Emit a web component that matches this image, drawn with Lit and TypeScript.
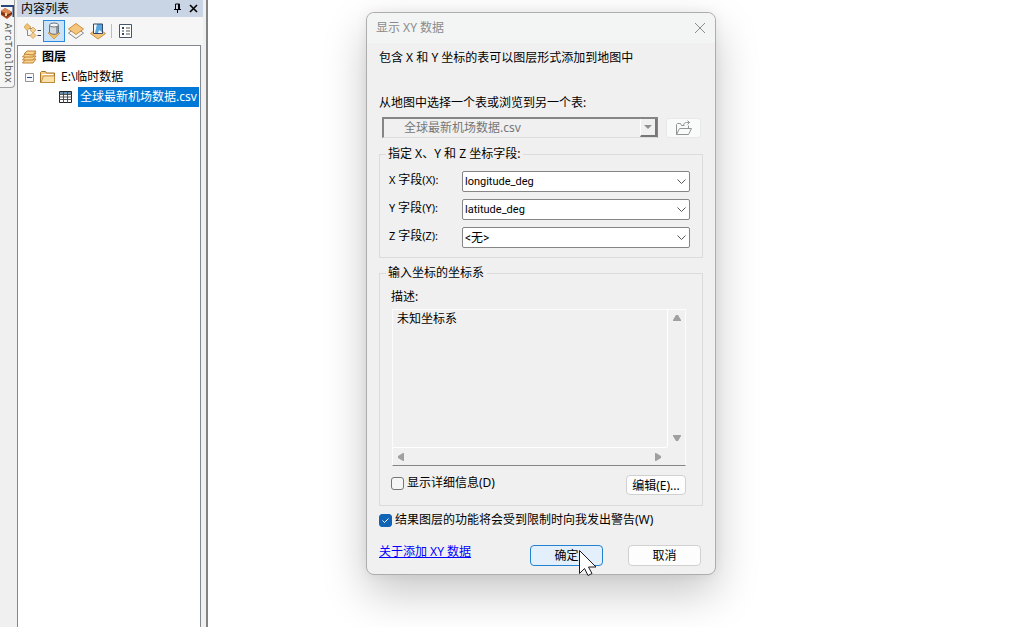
import { LitElement, html, css, svg } from "lit";
import { customElement, state } from "lit/decorators.js";

const sheet = (y: number, fill: string, stroke: string) =>
  svg`<path d="M.5 ${y}L8 ${y - 5.5}L15.500 ${y}L8 ${y + 5.5}Z" fill=${fill} stroke=${stroke}/>`;

const base = css`
  :host { box-sizing: border-box; font: 12px/16px "Noto Sans", "Noto Sans CJK SC", sans-serif; color: #000; }
  * { box-sizing: border-box; }
  svg { display: block; flex: none; }
  button, select, textarea, input { font: inherit; color: inherit; margin: 0; }
`;

@customElement("contents-panel")
class ContentsPanel extends LitElement {
  static styles = [base, css`
    :host { display: flex; width: 208px; flex: none; background: #f0f0f0; border-right: 2px solid #838383; }
    .dock { width: 17px; flex: none; }
    .tab {
      width: 15px; height: 88px; padding: 5px 0 0; display: flex; flex-direction: column; align-items: center;
      gap: 4px; background: #f5f5f5; border: 1px solid #a0a0a0; border-width: 0 1px 1px 0;
      border-radius: 0 0 4px 0; font: 10px/12px "Liberation Mono", monospace; color: #555;
    }
    .tab span { writing-mode: vertical-rl; }
    .panel { flex: 1; display: flex; flex-direction: column; margin-right: 3px; min-width: 0; }
    .head { display: flex; align-items: center; height: 17px; padding: 0 2px 0 4px; background: #c9d5e4; }
    .title { flex: 1; }
    .plain { border: 0; background: none; padding: 0; width: 16px; height: 16px; display: grid; place-items: center; }
    .bar { display: flex; align-items: center; height: 28px; padding-left: 4px; background: #f6f6f6; }
    .tool { border: 1px solid transparent; background: none; padding: 0; width: 22px; height: 22px; display: grid; place-items: center; }
    .tool.on { background: #cbe3f7; border-color: #2b8ade; }
    .sep { width: 1px; height: 14px; margin: 0 3px 0 2px; background: #bdbdbd; }
    .tree {
      flex: 1; margin: 0 2px 0 0; padding: 1px 0 0 4px; list-style: none; background: #fff;
      border: 1px solid #828790; border-bottom: 0;
    }
    .row { display: flex; align-items: center; height: 20px; white-space: nowrap; }
    .root { gap: 5px; font-weight: bold; }
    .folder { padding-left: 3px; gap: 6px; }
    .table { padding-left: 37px; gap: 6px; }
    .sel { background: #0078d7; color: #fff; height: 20px; line-height: 19px; padding: 0 2px; }
  `];

  render() {
    return html`
      <div class="dock">
        <div class="tab">
          <svg width="13" height="14" viewBox="0 0 13 14">
            <path d="M0 0h13v12H0z" fill="#f4f6fa"/><path d="M0 1h12.500v11" fill="none" stroke="#28487c" stroke-width="2"/>
            <path d="M0 6l4-3 7 4v3l-5 4-6-4z" fill="#a94b23"/><path d="M0 6l4-3 7 4-4 2z" fill="#dd8752"/>
            <path d="M0 8l6 3 5-3" fill="none" stroke="#5c210c"/><path d="M4 8h2v3H4z" fill="#f3d397"/>
          </svg>
          <span>ArcToolbox</span>
        </div>
      </div>
      <section class="panel">
        <div class="head">
          <span class="title">内容列表</span>
          <button class="plain" aria-label="自动隐藏">
            <svg width="9" height="11" viewBox="0 0 9 11"><path d="M2.500 6V1h4v5M5.500 1v5M1 6.500h7M4.500 7v3" fill="none" stroke="#000"/></svg>
          </button>
          <button class="plain" aria-label="关闭">
            <svg width="9" height="9" viewBox="0 0 9 9"><path d="M1 1l7 7M8 1l-7 7" stroke="#000" stroke-width="1.600"/></svg>
          </button>
        </div>
        <div class="bar">
          <button class="tool" aria-label="按绘制顺序列出">
            <svg width="17" height="16" viewBox="0 0 17 16">
              <path d="M3.500 7v5.500H7M5 5.500h4" fill="none" stroke="#8a8a8a"/>
              <path d="M0 4l3-3.500L7 4 3 7.500z" fill="#f0c271" stroke="#c08c3a" stroke-width=".6"/>
              <path d="M6 7l3-3 3 3-3 3zM6 12.500l3-3 3 3-3 3z" fill="#f5cf8d" stroke="#c08c3a" stroke-width=".6"/>
              <path d="M13.500 7.500H17M13.500 12.500H17" stroke="#2d3d5a" stroke-width="1.200"/>
            </svg>
          </button>
          <button class="tool on" aria-label="按源列出">
            <svg width="14" height="18" viewBox="0 0 14 18">
              <path d="M1 11l6-3 6 3-6 6z" fill="#f3bd68" stroke="#c58b38" stroke-width=".7"/>
              <path d="M2.500 3v7c0 3 9 3 9 0V3" fill="#d5dade" stroke="#68737e"/>
              <path d="M9 4h2v7H9z" fill="#8793a0"/><ellipse cx="7" cy="3" rx="4.500" ry="2" fill="#f5f7f9" stroke="#68737e"/>
            </svg>
          </button>
          <button class="tool" aria-label="按可见性列出">
            <svg width="16" height="16" viewBox="0 0 16 16">${sheet(10, "#f5f5f5", "#868686")}${sheet(6, "#f5c67d", "#c98e40")}</svg>
          </button>
          <button class="tool" aria-label="按选择列出">
            <svg width="16" height="17" viewBox="0 0 16 17">
              <path d="M.5 10.500L4 8h8l3.500 2.500L8 16z" fill="#f5c67d" stroke="#c98e40"/>
              <path d="M3.500 1v9h9V1z" fill="#f6f9fc"/><path d="M7 1h5v8l-3-2-1 3H5z" fill="#58a6df"/>
              <path d="M3.500 1v9.500h9V1z" fill="none" stroke="#33486b"/>
            </svg>
          </button>
          <span class="sep"></span>
          <button class="tool" aria-label="选项">
            <svg width="14" height="14" viewBox="0 0 14 14">
              <path d="M.5.5h12v13H.5z" fill="#fff" stroke="#46566d"/>
              <path d="M3 3h2v2H3zM3 6.500h2v1H3zM3 9h2v2H3z" fill="#33486b"/><path d="M7 4h4M7 7h4M7 10h4" stroke="#555"/>
            </svg>
          </button>
        </div>
        <ul class="tree">
          <li class="row root">
            <svg width="15" height="14" viewBox="0 0 15 14">
              <g fill="#f9d48f" stroke="#b97b2b" stroke-width=".9">
                <path d="M.5 13L4 9h10l-3 4z"/><path d="M.5 10L4 6h10l-3 4z"/><path d="M.5 7L4 3h10l-3 4z"/><path d="M2 4l3-3h9l-3 4z"/>
              </g>
            </svg>
            图层
          </li>
          <li class="row folder">
            <svg width="9" height="9" viewBox="0 0 9 9"><path d="M.5.5h8v8h-8z" fill="#fafafa" stroke="#929292"/><path d="M2 4.500h5" stroke="#2c4b8e"/></svg>
            <svg width="15" height="14" viewBox="0 0 15 14">
              <path d="M.5 12.500v-10l1-1h4l1 1.500h8v9.500z" fill="#f3cb82" stroke="#a77528"/>
              <path d="M1 12.500L3.500 6h11v6.500z" fill="#fbe0a8" stroke="#b98538" stroke-width=".8"/><path d="M2 4.500h11" stroke="#fff"/>
            </svg>
            <span>E:\\临时数据</span>
          </li>
          <li class="row table">
            <svg width="13" height="12" viewBox="0 0 13 12">
              <path d="M.5.5h12v11H.5z" fill="#fff" stroke="#222"/><path d="M1 1h11v2H1z" fill="#6b8fae"/>
              <path d="M0 3.500h13M0 6h13M0 8.500h13M4.500 1v11M8.500 1v11" stroke="#444" stroke-width=".9"/>
            </svg>
            <span class="sel">全球最新机场数据.csv</span>
          </li>
        </ul>
      </section>`;
  }
}

@customElement("xy-dialog")
class XyDialog extends LitElement {
  @state() private fields = [
    { key: "X", value: "longitude_deg" },
    { key: "Y", value: "latitude_deg" },
    { key: "Z", value: "<无>" },
  ];

  static styles = [base, css`
    :host {
      display: block; position: relative; width: 350px; background: #f0f0f0; border: 1px solid #adadad; border-radius: 8px;
      box-shadow: 0 18px 44px rgba(0, 0, 0, .22), 0 0 12px rgba(0, 0, 0, .06);
    }
    .title { display: flex; align-items: center; justify-content: space-between; height: 30px; padding: 0 9px; background: #f3f5f4; border-radius: 8px 8px 0 0; color: #8b8b8b; }
    .close { border: 0; background: none; padding: 0; width: 12px; height: 12px; }
    .body { padding: 7px 12px 8px; }
    .body p { margin: 0 0 29px; }
    .pick { display: flex; align-items: center; gap: 8px; margin: 6px 2px 8px 3px; }
    .source { flex: 1; position: relative; display: flex; }
    .source select {
      appearance: none; width: 100%; height: 21px; padding: 0 20px; background: #f0f0f0; color: #777; opacity: 1;
      border: 2px solid #858585; border-width: 2px 1px 1px 2px; border-bottom-color: #ddd; border-radius: 0;
    }
    .drop { position: absolute; right: 1px; top: 2px; width: 17px; height: 18px; display: grid; place-items: center; background: #f0f0f0; border: 1px solid #777; border-width: 0 2px 2px 1px; border-left-color: #fff; pointer-events: none; }
    .open { width: 35px; height: 20px; padding: 0; display: grid; place-items: center; background: #f9fafa; border: 1px solid #e8e8e8; border-radius: 3px; }
    fieldset { margin: 0; padding: 0 12px; border: 1px solid #dcdcdc; min-width: 0; }
    legend { margin-left: -6px; padding: 0 3px 0 2px; }
    .grid { display: grid; grid-template-columns: 70px 1fr; gap: 7px 0; padding: 9px 0 9px; }
    .grid label { margin-left: -3px; font-size: 11px; line-height: 18px; }
    .cjk { font-size: 12px; }
    .field { position: relative; display: flex; }
    .field select { appearance: none; width: 100%; height: 21px; padding: 0 2px; background: #fff; border: 1px solid #868686; border-radius: 2px; font-family: Roboto, "Noto Sans CJK SC", sans-serif; font-size: 11px; }
    .field .none { font-size: 12px; }
    .field svg { position: absolute; right: 4px; top: 8px; pointer-events: none; }
    .crs { margin-top: 7px; padding-bottom: 10px; }
    .desc { display: block; margin: 8px 0 4px -1px; }
    .memo { display: grid; grid-template: 1fr 18px / 1fr 18px; height: 157px; margin-right: 4px; border: 1px solid #fcfcfc; border-bottom: 1px solid #858585; }
    textarea { resize: none; border: 0; padding: 1px 4px; background: none; outline: 0; overflow: hidden; width: 100%; height: 100%; }
    .bar { display: flex; justify-content: space-between; align-items: center; padding: 5px; }
    .v { flex-direction: column; border-left: 1px solid #fff; }
    .h { border-top: 1px solid #fff; }
    .line { display: flex; align-items: flex-start; justify-content: space-between; margin: 9px 4px 0 -1px; }
    .check { display: flex; align-items: center; gap: 3px; }
    input { appearance: none; width: 13px; height: 13px; border: 1px solid #767676; border-radius: 3px; background: #f6f6f6; }
    input:checked { border-color: #0f64b5; background: #0f64b5 url("data:image/svg+xml,%3Csvg xmlns='http://www.w3.org/2000/svg' viewBox='0 0 11 11'%3E%3Cpath d='M2.500 5.500l2 2 4-4' fill='none' stroke='%23fff'/%3E%3C/svg%3E"); }
    .btn { height: 21px; padding: 0; background: #fdfdfd; border: 1px solid #d0d0d0; border-radius: 4px; line-height: 19px; }
    .edit { width: 60px; height: 20px; }
    .warn { margin-top: 6px; }
    .foot { display: flex; align-items: center; gap: 25px; margin: 17px 2px 0 0; }
    .foot a { flex: 1; color: #00f; margin-top: -8px; }
    .wide { width: 73px; }
    .ok { background: #e3f0fb; border-color: #2381d2; }
    .cursor { position: absolute; left: 211px; top: 536px; }
  `];

  render() {
    return html`
      <div class="title">
        <span>显示 XY 数据</span>
        <button class="close" aria-label="关闭">
          <svg width="12" height="12" viewBox="0 0 12 12"><path d="M1 1l10 10M11 1L1 11" stroke="#8b8b8b"/></svg>
        </button>
      </div>
      <div class="body">
        <p>包含 X 和 Y 坐标的表可以图层形式添加到地图中</p>
        <label for="source">从地图中选择一个表或浏览到另一个表:</label>
        <div class="pick">
          <div class="source">
            <select id="source" disabled><option>全球最新机场数据.csv</option></select>
            <span class="drop"><svg width="8" height="4" viewBox="0 0 8 4"><path d="M0 0h8L4 4z" fill="#909090"/></svg></span>
          </div>
          <button class="open" aria-label="浏览">
            <svg width="17" height="16" viewBox="0 0 17 16" fill="none" stroke="#949494">
              <path d="M1.500 14.500v-10l1-1h3l1 2h3M1.500 14.500l3-6h12l-3 6zM13.500 8V5.500M8.500 5.500c0-2 1.500-3 3-3h3M12.500.5l2 2-2 2"/>
            </svg>
          </button>
        </div>
        <fieldset>
          <legend>指定 X、Y 和 Z 坐标字段:</legend>
          <div class="grid">
            ${this.fields.map((f) => html`
              <label for=${f.key}>${f.key} <span class="cjk">字段</span>(${f.key}):</label>
              <div class="field">
                <select id=${f.key} class=${f.key === "Z" ? "none" : ""}><option>${f.value}</option></select>
                <svg width="9" height="6" viewBox="0 0 9 6"><path d="M.5.5l4 4 4-4" fill="none" stroke="#555"/></svg>
              </div>`)}
          </div>
        </fieldset>
        <fieldset class="crs">
          <legend>输入坐标的坐标系</legend>
          <label class="desc" for="desc">描述:</label>
          <div class="memo">
            <textarea id="desc" readonly .value=${"未知坐标系"}></textarea>
            <div class="bar v">
              <svg width="8" height="7" viewBox="0 0 8 7"><path d="M3 0h2l3 5v1H0V5z" fill="#a0a0a0"/></svg>
              <svg width="8" height="7" viewBox="0 0 8 7"><path d="M0 0h8v1L5 6H3L0 1z" fill="#a0a0a0"/></svg>
            </div>
            <div class="bar h">
              <svg width="7" height="8" viewBox="0 0 7 8"><path d="M6 0v8H5L0 5V3l5-3z" fill="#a0a0a0"/></svg>
              <svg width="7" height="8" viewBox="0 0 7 8"><path d="M0 0h1l5 3v2L1 8H0z" fill="#a0a0a0"/></svg>
            </div>
          </div>
          <div class="line">
            <label class="check"><input type="checkbox">显示详细信息(D)</label>
            <button class="btn edit">编辑(E)...</button>
          </div>
        </fieldset>
        <label class="check warn"><input type="checkbox" checked>结果图层的功能将会受到限制时向我发出警告(W)</label>
        <div class="foot">
          <a href="#">关于添加 XY 数据</a>
          <button class="btn wide ok">确定</button>
          <button class="btn wide">取消</button>
        </div>
      </div>
      <svg class="cursor" width="20" height="28" viewBox="0 0 20 28">
        <path d="M1.500 1.500v23l5-5 3.500 7 4-2-3.500-6.500h7.500z" fill="#fff" stroke="#1c1820"/>
      </svg>`;
  }
}

@customElement("app-root")
class AppRoot extends LitElement {
  static styles = css`
    :host { display: flex; height: 100vh; overflow: hidden; background: #fff; }
    .view { flex: 1; display: flex; align-items: flex-start; padding: 12px 0 0 158px; }
    xy-dialog { flex: none; }
  `;

  render() {
    return html`
      <contents-panel></contents-panel>
      <main class="view"><xy-dialog></xy-dialog></main>`;
  }
}
